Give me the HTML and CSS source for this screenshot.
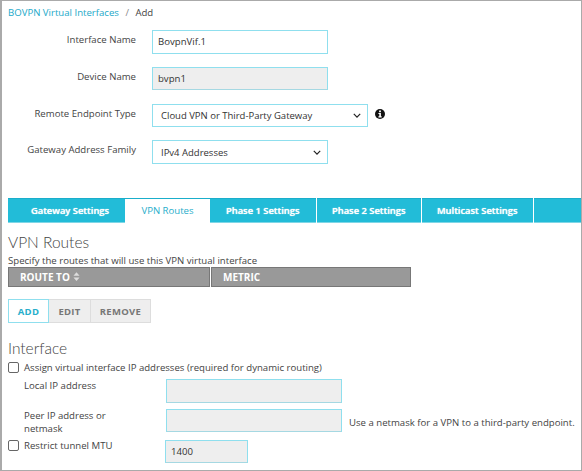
FILE: index.html
```html
<!DOCTYPE html>
<html lang="en">
<head>
    <meta charset="UTF-8">
    <meta name="viewport" content="width=device-width, initial-scale=1.0">
    <title>BOVPN Virtual Interfaces - Add</title>
    <link rel="stylesheet" href="styles.css">
</head>
<body>
    <div class="frame">
        <div class="breadcrumb">
            <a class="crumb-link">BOVPN Virtual Interfaces</a>
            <span class="crumb-sep">/</span>
            <span>Add</span>
        </div>

        <div class="top-form">
            <div class="form-row">
                <label class="form-label">Interface Name</label>
                <input class="text-input" type="text" value="BovpnVif.1">
            </div>
            <div class="form-row">
                <label class="form-label">Device Name</label>
                <input class="text-input is-disabled" type="text" value="bvpn1" readonly>
            </div>
            <div class="form-row">
                <label class="form-label">Remote Endpoint Type</label>
                <div class="select-box select-wide">
                    <span>Cloud VPN or Third-Party Gateway</span>
                    <svg class="chevron" viewBox="0 0 10 6"><path d="M1 1l4 4 4-4" fill="none" stroke="#222" stroke-width="1.5"/></svg>
                </div>
                <svg class="info-icon" viewBox="0 0 10 10">
                    <circle cx="5" cy="5" r="5" fill="#111"/>
                    <rect x="4.1" y="1.5" width="1.8" height="1.7" fill="#fff"/>
                    <path d="M3.4 4h2.5v3.3h.8v1.1H3.4V7.3h.9V5.1h-.9z" fill="#fff"/>
                </svg>
            </div>
            <div class="form-row">
                <label class="form-label">Gateway Address Family</label>
                <div class="select-box">
                    <span>IPv4 Addresses</span>
                    <svg class="chevron" viewBox="0 0 10 6"><path d="M1 1l4 4 4-4" fill="none" stroke="#222" stroke-width="1.5"/></svg>
                </div>
            </div>
        </div>

        <div class="tabs">
            <div class="tab tab-gateway">Gateway Settings</div>
            <div class="tab tab-routes active">VPN Routes</div>
            <div class="tab tab-phase1">Phase 1 Settings</div>
            <div class="tab tab-phase2">Phase 2 Settings</div>
            <div class="tab tab-multicast">Multicast Settings</div>
            <div class="tab tab-rest"></div>
        </div>

        <h2 class="section-title routes-title">VPN Routes</h2>
        <p class="section-help">Specify the routes that will use this VPN virtual interface</p>

        <div class="table-head">
            <div class="col col-route">
                ROUTE TO
                <svg class="sort-icon" viewBox="0 0 8 10">
                    <path d="M4 0l3.5 4H.5zM4 10L.5 6h7z" fill="#ddd"/>
                </svg>
            </div>
            <div class="col col-metric">METRIC</div>
        </div>

        <div class="btn-group">
            <button class="btn btn-add">ADD</button>
            <button class="btn btn-edit">EDIT</button>
            <button class="btn btn-remove">REMOVE</button>
        </div>

        <h2 class="section-title iface-title">Interface</h2>

        <label class="check-row assign-check">
            <span class="check-box"></span>
            <span>Assign virtual interface IP addresses (required for dynamic routing)</span>
        </label>

        <div class="ip-row">
            <label class="ip-label">Local IP address</label>
            <input class="text-input is-disabled" type="text" readonly>
        </div>
        <div class="ip-row">
            <label class="ip-label">Peer IP address or netmask</label>
            <input class="text-input is-disabled" type="text" readonly>
            <span class="ip-hint">Use a netmask for a VPN to a third-party endpoint.</span>
        </div>

        <div class="mtu-row">
            <label class="check-row mtu-check">
                <span class="check-box"></span>
                <span>Restrict tunnel MTU</span>
            </label>
            <input class="text-input is-disabled mtu-input" type="text" value="1400" readonly>
        </div>
    </div>
</body>
</html>
```

FILE: styles.css
```css
* {
    margin: 0;
    padding: 0;
    box-sizing: border-box;
}

body {
    font-family: "Open Sans", sans-serif;
    font-size: 9.6px;
    color: #444;
    background: #fff;
}

.frame {
    width: 582px;
    height: 471px;
    border: 1px solid #aaa;
    border-left-width: 2px;
    padding: 5px 0 0 6px;
    overflow: hidden;
}

.breadcrumb {
    height: 14px;
    line-height: 14px;
}

.crumb-link {
    color: #23a9c9;
}

.crumb-sep {
    color: #888;
    margin: 0 4px;
}

.top-form {
    margin-top: 10px;
    display: flex;
    flex-direction: column;
    gap: 13.25px;
}

.form-row {
    display: flex;
    align-items: flex-start;
    height: 23.5px;
}

.form-label {
    width: 128px;
    text-align: right;
    line-height: 20px;
    margin-right: 16px;
}

.text-input {
    width: 176px;
    height: 23.5px;
    flex-shrink: 0;
    border: 1px solid #8fdfee;
    padding: 0 5px;
    font-family: "Open Sans", sans-serif;
    font-size: 9.6px;
    color: #333;
    background: #fff;
    outline: none;
}

.is-disabled {
    background: #eee;
    border-bottom-color: #a5d8e2;
}

.select-box {
    width: 176px;
    height: 23.5px;
    border: 1px solid #8fdfee;
    padding: 0 6px 0 8px;
    display: flex;
    align-items: center;
    justify-content: space-between;
    font-size: 9.5px;
    color: #333;
    background: #fff;
}

.select-wide {
    width: 216px;
}

.chevron {
    width: 8px;
    height: 5px;
}

.info-icon {
    width: 10px;
    height: 10px;
    margin: 5px 0 0 7px;
}

.tabs {
    margin-top: 34.25px;
    height: 24.5px;
    display: flex;
    color: #fff;
}

.tab {
    height: 100%;
    background: #22bcd8;
    border-top: 1px solid #1aaecb;
    border-bottom: 1px solid #7fd6e6;
    display: flex;
    align-items: center;
    justify-content: center;
    font-weight: 600;
    font-size: 9.4px;
    margin-right: 1px;
    text-shadow: 0 0 1px #fff;
}

.tab-gateway { width: 117px; padding-left: 7px; margin-right: 0; }
.tab-routes { width: 85px; margin-right: 0; }
.tab-phase1 { width: 105.5px; }
.tab-phase2 { width: 104.5px; }
.tab-multicast { width: 110.5px; }
.tab-rest { flex: 1; margin-right: 0; }

.tab.active {
    background: #fff;
    color: #28aecb;
    font-weight: 400;
    font-size: 9.6px;
    border-bottom-color: #fff;
    text-shadow: none;
}

.section-title {
    font-family: Lato, sans-serif;
    font-weight: 300;
    font-size: 15.5px;
    line-height: 20px;
    color: #444;
}

.routes-title {
    margin-top: 9px;
}

.section-help {
    margin-top: 2.5px;
    line-height: 13px;
}

.table-head {
    display: flex;
    gap: 1px;
    width: 403px;
    height: 19.5px;
}

.col {
    background: #999;
    border: 1px solid #777;
    color: #fff;
    font-size: 10px;
    font-weight: 700;
    padding-left: 11px;
    display: flex;
    align-items: center;
}

.col-route {
    width: 202px;
}

.col-metric {
    width: 200px;
}

.sort-icon {
    width: 7px;
    height: 9px;
    margin-left: 3px;
}

.btn-group {
    display: flex;
    margin-top: 12.5px;
    height: 24px;
}

.btn {
    font-family: "Open Sans", sans-serif;
    font-size: 9.5px;
    font-weight: 700;
    letter-spacing: 0.3px;
    color: #777;
    background: #eee;
    border: 1px solid #ddd;
    border-left: 0;
}

.btn-add {
    width: 41px;
    color: #28aecb;
    background: #fff;
    border: 1px solid #8fdfee;
}

.btn-edit {
    width: 42px;
}

.btn-remove {
    width: 60px;
}

.iface-title {
    margin-top: 15px;
}

.check-row {
    display: flex;
    align-items: center;
    gap: 5px;
    height: 12px;
}

.assign-check {
    margin-top: 3px;
}

.check-box {
    width: 11px;
    height: 11px;
    flex-shrink: 0;
    border: 1px solid #666;
    border-radius: 2px;
    background: #fff;
}

.ip-row {
    display: flex;
    align-items: flex-start;
    height: 23.5px;
    margin-left: 16px;
    margin-top: 6px;
}

.ip-label {
    width: 142px;
    flex-shrink: 0;
    padding-right: 40px;
    line-height: 13px;
}

.ip-hint {
    margin: 7px 0 0 7px;
    white-space: nowrap;
}

.mtu-row {
    display: flex;
    align-items: flex-start;
    margin-top: 7.5px;
}

.mtu-check {
    width: 157px;
}

.mtu-input {
    width: 83px;
}
```
